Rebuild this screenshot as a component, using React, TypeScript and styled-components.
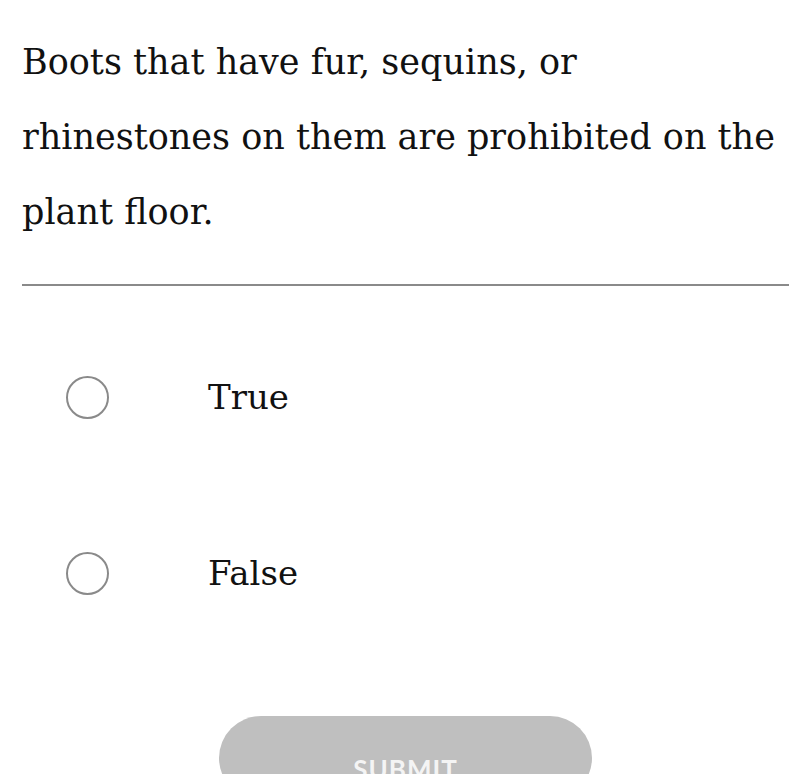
import React, { useState } from 'react';
import styled, { createGlobalStyle } from 'styled-components';

const GlobalStyle = createGlobalStyle`
  html, body {
    margin: 0;
    padding: 0;
    background: #fff;
    overflow: hidden;
  }
`;

const Page = styled.div`
  width: 811px;
  height: 774px;
  padding: 0 22px;
  box-sizing: border-box;
  display: flex;
  flex-direction: column;
  overflow: hidden;

  & > * {
    flex-shrink: 0;
  }
`;

const Question = styled.p`
  margin: 25px 0 0;
  font-family: 'DejaVu Serif', serif;
  font-size: 35px;
  line-height: 75px;
  color: #111;
`;

const Divider = styled.hr`
  margin: 34px 0 0;
  border: none;
  height: 2px;
  background: #8a8a8a;
`;

const Options = styled.div`
  display: flex;
  flex-direction: column;
  gap: 132px;
  margin-top: 89px;
`;

const Option = styled.label`
  display: flex;
  align-items: center;
  cursor: pointer;
`;

const Radio = styled.span<{ $checked: boolean }>`
  width: 39px;
  height: 39px;
  margin-left: 44px;
  border: 2px solid #8a8a8a;
  border-radius: 50%;
  display: flex;
  align-items: center;
  justify-content: center;

  &::after {
    content: '';
    width: 21px;
    height: 21px;
    border-radius: 50%;
    background: ${({ $checked }) => ($checked ? '#8a8a8a' : 'transparent')};
  }
`;

const OptionText = styled.span`
  margin-left: 99px;
  font-family: 'DejaVu Serif', serif;
  font-size: 34px;
  line-height: 44px;
  color: #111;
`;

const SubmitRow = styled.div`
  display: flex;
  justify-content: center;
  margin-top: 121px;
`;

const SubmitButton = styled.button`
  width: 373px;
  height: 84px;
  border: none;
  border-radius: 42px;
  background: #bfbfbf;
  color: #f4f4f4;
  font-family: Lato, sans-serif;
  font-weight: 700;
  font-size: 26px;
  letter-spacing: 1px;
  display: flex;
  justify-content: center;
  align-items: flex-start;
  padding: 37px 0 0;
`;

const answers = ['True', 'False'];

export default function App() {
  const [picked, setPicked] = useState<string | null>(null);

  return (
    <Page>
      <GlobalStyle />
      <Question>
        Boots that have fur, sequins, or rhinestones on them are prohibited on the plant floor.
      </Question>
      <Divider />
      <Options>
        {answers.map((answer) => (
          <Option key={answer} onClick={() => setPicked(answer)}>
            <Radio $checked={picked === answer} />
            <OptionText>{answer}</OptionText>
          </Option>
        ))}
      </Options>
      <SubmitRow>
        <SubmitButton disabled={!picked}>SUBMIT</SubmitButton>
      </SubmitRow>
    </Page>
  );
}
